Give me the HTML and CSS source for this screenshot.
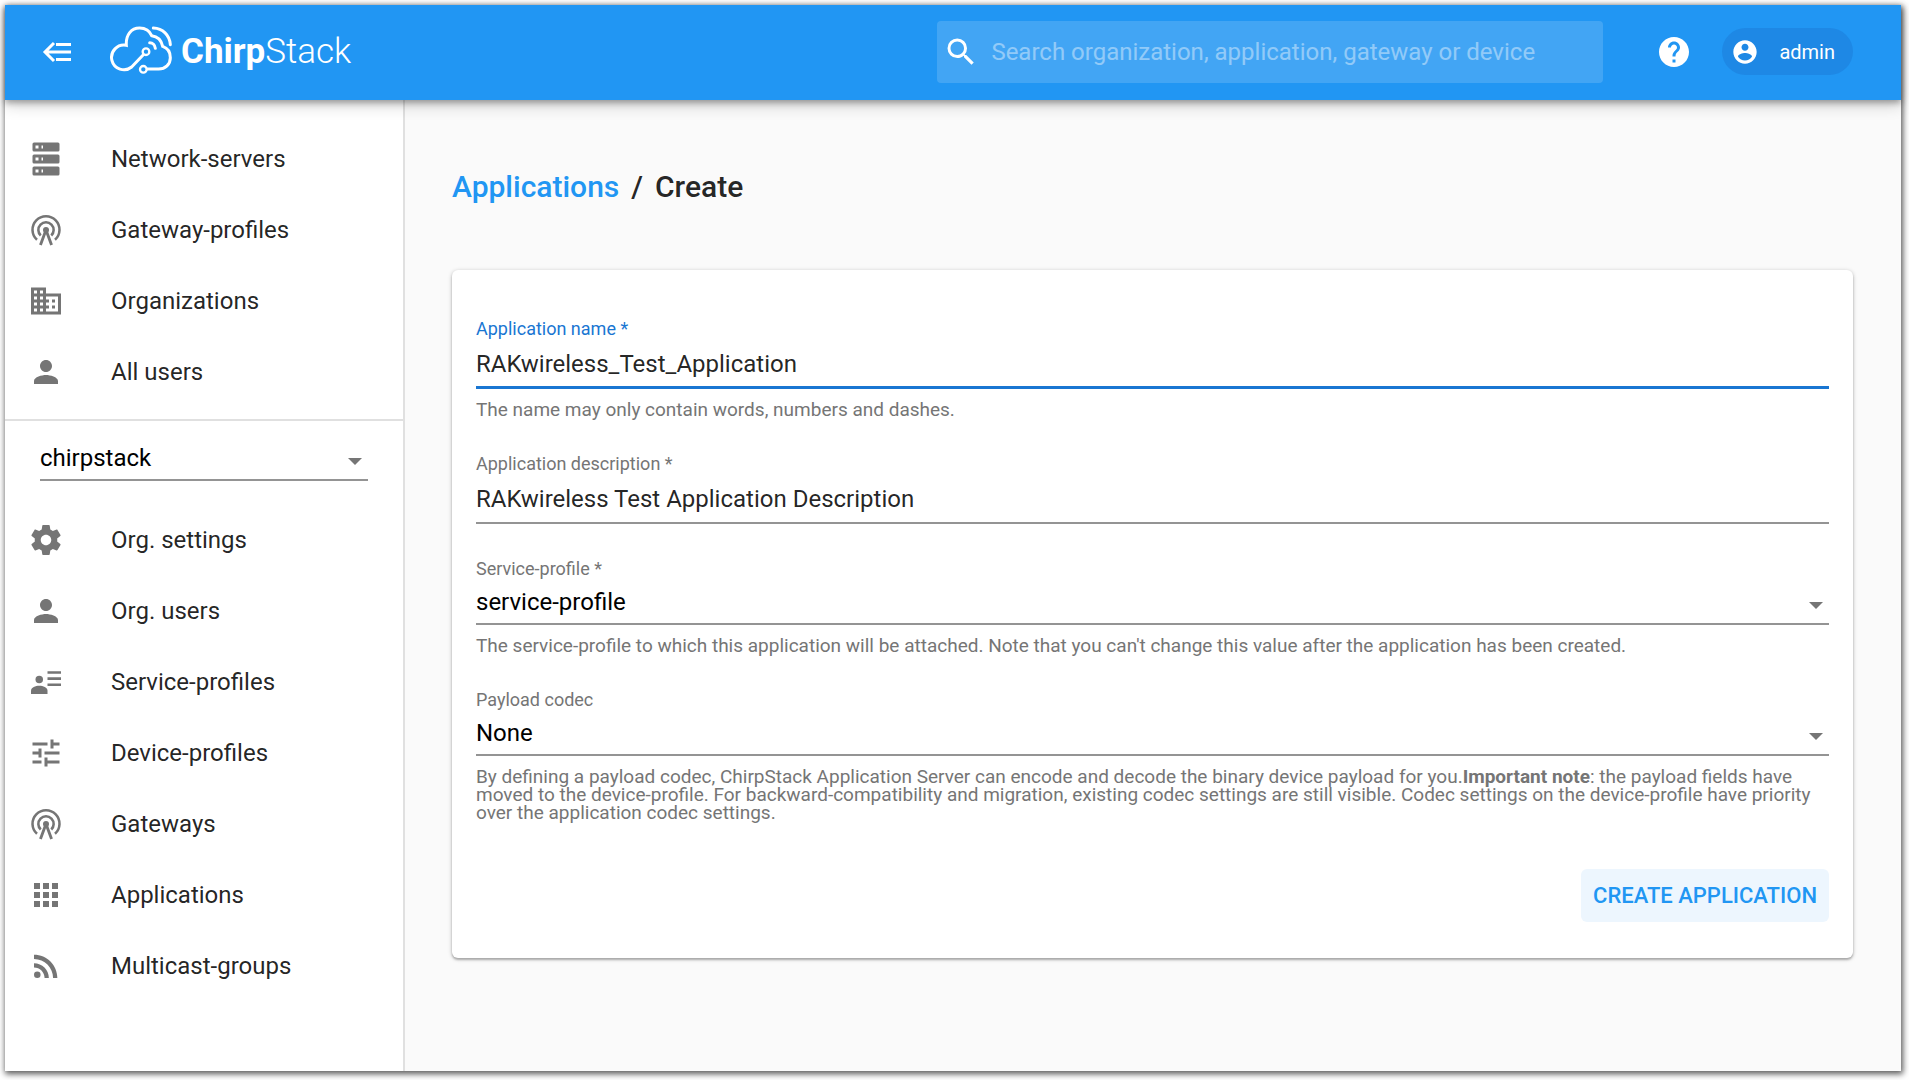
FILE: index.html
```
<!DOCTYPE html>
<html lang="en">
<head>
    <meta charset="utf-8">
    <title>ChirpStack Application Server</title>
    <meta name="viewport" content="width=device-width, initial-scale=1.0">
    <link rel="stylesheet" href="styles.css">
</head>
<body>
    <div class="app">
        <header class="topbar">
            <button class="menu-button" type="button" aria-label="Toggle menu">
                <svg class="line-art" width="36" height="36" viewBox="0 0 36 36" stroke-width="3"><path d="M15 9L6 18l9 9M6 18h26M17 10.500h15M17 25.500h15"/></svg>
            </button>
            <a class="logo" href="#">
                <svg class="line-art" width="64" height="50" viewBox="324 70 192 150" stroke-width="9" stroke-linecap="round">
                    <path d="M427 159L392 196A37 37 0 1 1 376 131C374 100 390 79 416 79C434 79 446 88 452 102C470 104 481 115 485 134C500 139 508 151 508 168C508 188 493 202 473 202H439"/>
                    <circle cx="435" cy="150" r="10" stroke-width="7"/>
                    <circle cx="427" cy="203" r="10" stroke-width="7"/>
                    <path d="M446 123C455 123 462 130 463 140"/>
                    <path d="M457 79C485 80 506 100 508 129"/>
                </svg>
                <span class="logo-text"><b>Chirp</b>Stack</span>
            </a>
            <div class="search">
                <svg class="icon" viewBox="0 0 24 24"><path d="M15.500 14h-.79l-.28-.27A6.470 6.470 0 0 0 16 9.500 6.500 6.500 0 1 0 9.500 16c1.610 0 3.090-.59 4.230-1.570l.27.28v.79l5 4.990L20.490 19l-4.990-5zm-6 0C7.010 14 5 11.990 5 9.500S7.010 5 9.500 5 14 7.010 14 9.500 11.990 14 9.500 14z"/></svg>
                <input type="text" aria-label="Search" placeholder="Search organization, application, gateway or device">
            </div>
            <a class="help" href="#" aria-label="Help">
                <svg class="icon" viewBox="0 0 24 24"><path d="M12 2C6.480 2 2 6.480 2 12s4.480 10 10 10 10-4.480 10-10S17.520 2 12 2zm1 17h-2v-2h2v2zm2.070-7.750l-.9.92C13.450 12.900 13 13.500 13 15h-2v-.5c0-1.100.45-2.100 1.170-2.830l1.240-1.260c.37-.36.59-.86.59-1.410 0-1.100-.9-2-2-2s-2 .9-2 2H8c0-2.210 1.790-4 4-4s4 1.790 4 4c0 .88-.36 1.680-.93 2.250z"/></svg>
            </a>
            <button class="user" type="button">
                <svg width="28" height="28" viewBox="0 0 24 24"><path d="M12 2C6.480 2 2 6.480 2 12s4.480 10 10 10 10-4.480 10-10S17.520 2 12 2zm0 3c1.660 0 3 1.340 3 3s-1.340 3-3 3-3-1.340-3-3 1.340-3 3-3zm0 14.200c-2.500 0-4.710-1.280-6-3.220.03-1.990 4-3.080 6-3.080 1.990 0 5.970 1.090 6 3.080-1.290 1.940-3.500 3.220-6 3.220z"/></svg>
                admin
            </button>
        </header>

        <div class="content">
            <nav class="sidebar">
                <ul class="nav-list">
                    <li><a href="#">
                        <svg class="icon" viewBox="0 0 24 24"><path d="M4 1h16a1 1 0 0 1 1 1v4a1 1 0 0 1-1 1H4a1 1 0 0 1-1-1V2a1 1 0 0 1 1-1m0 8h16a1 1 0 0 1 1 1v4a1 1 0 0 1-1 1H4a1 1 0 0 1-1-1v-4a1 1 0 0 1 1-1m0 8h16a1 1 0 0 1 1 1v4a1 1 0 0 1-1 1H4a1 1 0 0 1-1-1v-4a1 1 0 0 1 1-1M9 5h1V3H9v2m0 8h1v-2H9v2m0 8h1v-2H9v2M5 3v2h2V3H5m0 8v2h2v-2H5m0 8v2h2v-2H5z" fill-rule="evenodd"/></svg>
                        Network-servers</a></li>
                    <li><a href="#">
                        <svg class="icon" viewBox="0 0 24 24"><g fill="none" stroke="currentColor" stroke-width="1.700"><path d="M6 18.500a9 9 0 1 1 12 0"/><path d="M8.500 15.700a5.100 5.100 0 1 1 7 0"/><path d="M12 12L8.300 22M12 12l3.700 10" stroke-width="1.900"/></g><circle cx="12" cy="12" r="2"/></svg>
                        Gateway-profiles</a></li>
                    <li><a href="#">
                        <svg class="icon" viewBox="0 0 24 24"><path d="M12 7V3H2v18h20V7H12zM6 19H4v-2h2v2zm0-4H4v-2h2v2zm0-4H4V9h2v2zm0-4H4V5h2v2zm4 12H8v-2h2v2zm0-4H8v-2h2v2zm0-4H8V9h2v2zm0-4H8V5h2v2zm10 12h-8v-2h2v-2h-2v-2h2v-2h-2V9h8v10zm-2-8h-2v2h2v-2zm0 4h-2v2h2v-2z"/></svg>
                        Organizations</a></li>
                    <li><a href="#">
                        <svg class="icon" viewBox="0 0 24 24"><path d="M12 12c2.210 0 4-1.790 4-4s-1.790-4-4-4-4 1.790-4 4 1.790 4 4 4zm0 2c-2.670 0-8 1.340-8 4v2h16v-2c0-2.660-5.330-4-8-4z"/></svg>
                        All users</a></li>
                </ul>

                <div class="org-picker">
                    <div class="select">
                        <select aria-label="Organization">
                            <option>chirpstack</option>
                        </select>
                    </div>
                </div>

                <ul class="nav-list">
                    <li><a href="#">
                        <svg class="icon" viewBox="0 0 24 24"><path d="M19.430 12.980c.04-.32.07-.64.07-.98s-.03-.66-.07-.98l2.110-1.650c.19-.15.24-.42.12-.64l-2-3.460c-.12-.22-.39-.3-.61-.22l-2.490 1c-.52-.4-1.080-.73-1.690-.98l-.38-2.650C14.460 2.180 14.250 2 14 2h-4c-.25 0-.46.18-.49.42l-.38 2.650c-.61.25-1.170.59-1.690.98l-2.490-1c-.23-.09-.49 0-.61.22l-2 3.460c-.13.22-.07.49.12.64l2.110 1.650c-.04.32-.07.65-.07.98s.03.66.07.98l-2.110 1.650c-.19.15-.24.42-.12.64l2 3.460c.12.22.39.3.61.22l2.490-1c.52.4 1.080.73 1.690.98l.38 2.650c.03.24.24.42.49.42h4c.25 0 .46-.18.49-.42l.38-2.650c.61-.25 1.170-.59 1.690-.98l2.490 1c.23.09.49 0 .61-.22l2-3.460c.12-.22.07-.49-.12-.64l-2.110-1.650zM12 15.500c-1.930 0-3.500-1.570-3.500-3.500s1.570-3.500 3.500-3.500 3.500 1.570 3.500 3.500-1.570 3.500-3.500 3.500z"/></svg>
                        Org. settings</a></li>
                    <li><a href="#">
                        <svg class="icon" viewBox="0 0 24 24"><path d="M12 12c2.210 0 4-1.790 4-4s-1.790-4-4-4-4 1.790-4 4 1.790 4 4 4zm0 2c-2.670 0-8 1.340-8 4v2h16v-2c0-2.660-5.330-4-8-4z"/></svg>
                        Org. users</a></li>
                    <li><a href="#">
                        <svg class="icon" viewBox="0 0 24 24"><path d="M13 4.800h9v1.700h-9zM13 8.900h9v1.700h-9zM13 13h9v1.700h-9z"/><circle cx="7.500" cy="10.300" r="2.500"/><path d="M7.500 14.500C5 14.500 2 15.800 2 17.600V20h11v-2.400c0-1.800-3-3.100-5.500-3.100z"/></svg>
                        Service-profiles</a></li>
                    <li><a href="#">
                        <svg class="icon" viewBox="0 0 24 24"><path d="M3 17v2h6v-2H3zM3 5v2h10V5H3zm10 16v-2h8v-2h-8v-2h-2v6h2zM7 9v2H3v2h4v2h2V9H7zm14 4v-2H11v2h10zm-6-4h2V7h4V5h-4V3h-2v6z"/></svg>
                        Device-profiles</a></li>
                    <li><a href="#">
                        <svg class="icon" viewBox="0 0 24 24"><g fill="none" stroke="currentColor" stroke-width="1.700"><path d="M6 18.500a9 9 0 1 1 12 0"/><path d="M8.500 15.700a5.100 5.100 0 1 1 7 0"/><path d="M12 12L8.300 22M12 12l3.700 10" stroke-width="1.900"/></g><circle cx="12" cy="12" r="2"/></svg>
                        Gateways</a></li>
                    <li><a href="#">
                        <svg class="icon" viewBox="0 0 24 24"><path d="M4 8h4V4H4v4zm6 12h4v-4h-4v4zm-6 0h4v-4H4v4zm0-6h4v-4H4v4zm6 0h4v-4h-4v4zm6-10v4h4V4h-4zm-6 4h4V4h-4v4zm6 6h4v-4h-4v4zm0 6h4v-4h-4v4z"/></svg>
                        Applications</a></li>
                    <li><a href="#">
                        <svg class="icon" viewBox="0 0 24 24"><circle cx="6.180" cy="17.820" r="2.180"/><path d="M4 4.440v2.830c7.030 0 12.730 5.700 12.730 12.730h2.830c0-8.590-6.970-15.560-15.560-15.560zm0 5.660v2.830c3.900 0 7.070 3.170 7.070 7.070h2.830c0-5.470-4.430-9.900-9.900-9.900z"/></svg>
                        Multicast-groups</a></li>
                </ul>
            </nav>

            <main class="main">
                <h1 class="breadcrumb"><a href="#">Applications</a><span>/</span><span>Create</span></h1>

                <form class="card">
                    <div class="field focused">
                        <label for="name">Application name *</label>
                        <input id="name" type="text" value="RAKwireless_Test_Application">
                        <p class="helper">The name may only contain words, numbers and dashes.</p>
                    </div>
                    <div class="field">
                        <label for="description">Application description *</label>
                        <input id="description" type="text" value="RAKwireless Test Application Description">
                    </div>
                    <div class="field">
                        <label for="serviceProfile">Service-profile *</label>
                        <div class="select">
                            <select id="serviceProfile">
                                <option>service-profile</option>
                            </select>
                        </div>
                        <p class="helper">The service-profile to which this application will be attached. Note that you can't change this value after the application has been created.</p>
                    </div>
                    <div class="field">
                        <label for="codec">Payload codec</label>
                        <div class="select">
                            <select id="codec">
                                <option>None</option>
                            </select>
                        </div>
                        <p class="helper">By defining a payload codec, ChirpStack Application Server can encode and decode the binary device payload for you.<strong>Important note</strong>: the payload fields have moved to the device-profile. For backward-compatibility and migration, existing codec settings are still visible. Codec settings on the device-profile have priority over the application codec settings.</p>
                    </div>
                    <div class="actions">
                        <button class="submit" type="button">CREATE APPLICATION</button>
                    </div>
                </form>
            </main>
        </div>
    </div>
</body>
</html>
```
FILE: styles.css
```
* {
    box-sizing: border-box;
}

body {
    margin: 0;
    min-height: 100vh;
    padding: 5px 8px 9px 5px;
    display: flex;
    background: #fff;
    color: rgba(0, 0, 0, 0.87);
    font-family: Roboto, sans-serif;
    font-size: 24px;
}

input, select, button {
    font: inherit;
    color: inherit;
}

a {
    color: inherit;
    text-decoration: none;
}

svg {
    display: block;
    flex-shrink: 0;
    fill: currentColor;
}

.line-art {
    fill: none;
    stroke: currentColor;
}

.icon {
    width: 36px;
    height: 36px;
}

.app {
    flex: 1;
    min-width: 0;
    display: flex;
    flex-direction: column;
    background: #fafafa;
    box-shadow: 1px 2px 6px 1px rgba(0, 0, 0, 0.65);
}

/* Top bar */
.topbar {
    position: relative;
    display: flex;
    align-items: center;
    height: 95px;
    padding: 0 48px 2px 34px;
    background: #2196f3;
    color: #fff;
    box-shadow: 0 3px 6px rgba(0, 0, 0, 0.3), 0 6px 14px rgba(0, 0, 0, 0.16);
}

.menu-button {
    padding: 0;
    border: 0;
    background: none;
}

.logo {
    display: flex;
    align-items: center;
    gap: 8px;
    margin: 0 auto 0 34px;
}

.logo svg {
    margin-bottom: 4px;
}

.logo-text {
    font-size: 35px;
    font-weight: 300;
}

.logo-text b {
    font-weight: 700;
}

.search {
    display: flex;
    flex: 0 0 666px;
    align-items: center;
    gap: 12px;
    height: 62px;
    padding: 0 6px;
    border-radius: 4px;
    background: rgba(255, 255, 255, 0.15);
}

.search input {
    flex: 1;
    min-width: 0;
    padding: 0;
    border: 0;
    outline: 0;
    background: none;
}

.search input::placeholder {
    color: #fff;
    opacity: 0.42;
}

.help {
    margin: 0 30px 0 53px;
}

.user {
    display: flex;
    align-items: center;
    gap: 20px;
    height: 47px;
    padding: 0 18px 0 9px;
    border: 0;
    border-radius: 24px;
    background: #1e88e5;
    font-size: 20px;
}

/* Sidebar */
.content {
    flex: 1;
    display: flex;
}

.sidebar {
    width: 400px;
    flex-shrink: 0;
    border-right: 2px solid #e0e0e0;
    background: #fff;
}

.nav-list {
    margin: 0;
    padding: 23px 0 12px;
    list-style: none;
}

.nav-list a {
    display: flex;
    align-items: center;
    gap: 47px;
    height: 71px;
    padding: 0 23px;
}

.nav-list .icon {
    color: #757575;
}

.org-picker {
    padding: 16px 35px 0;
    border-top: 2px solid #e0e0e0;
}

/* Form */
.main {
    flex: 1;
    min-width: 0;
    padding: 67px 48px 48px 47px;
}

.breadcrumb {
    display: flex;
    gap: 12px;
    margin: 0 0 63px;
    font-size: 30px;
    line-height: 40px;
    font-weight: 500;
}

.breadcrumb a {
    color: #2196f3;
}

.card {
    display: flex;
    flex-direction: column;
    gap: 36px;
    padding: 50px 24px 36px;
    border-radius: 6px;
    background: #fff;
    box-shadow: 0 1px 4px rgba(0, 0, 0, 0.25), 0 2px 2px rgba(0, 0, 0, 0.2);
}

.field label {
    display: block;
    margin-bottom: 3px;
    font-size: 18px;
    line-height: 18px;
    color: #757575;
}

.field input {
    display: block;
    width: 100%;
    height: 48px;
    padding: 0;
    border: 0;
    border-bottom: 2px solid #949494;
    outline: 0;
    background: none;
}

.field.focused label {
    color: #1976d2;
}

.field.focused input {
    border-bottom: 3px solid #1976d2;
}

.select {
    position: relative;
}

.select select {
    display: block;
    width: 100%;
    height: 44px;
    padding: 0 36px 0 0;
    border: 0;
    border-bottom: 2px solid #949494;
    border-radius: 0;
    outline: 0;
    appearance: none;
    background: none;
    color: #000;
}

.select::after {
    content: "";
    position: absolute;
    top: 21px;
    right: 6px;
    border: 7px solid transparent;
    border-top-color: #757575;
    border-bottom: 0;
    pointer-events: none;
}

.helper {
    margin: 12px 0 0;
    font-size: 19px;
    line-height: 18px;
    color: #757575;
}

.actions {
    display: flex;
    justify-content: flex-end;
    padding-top: 11px;
}

.submit {
    height: 53px;
    padding: 0 12px;
    border: 0;
    border-radius: 6px;
    background: #edf6fe;
    color: #2196f3;
    font-size: 22px;
    font-weight: 500;
}
```
